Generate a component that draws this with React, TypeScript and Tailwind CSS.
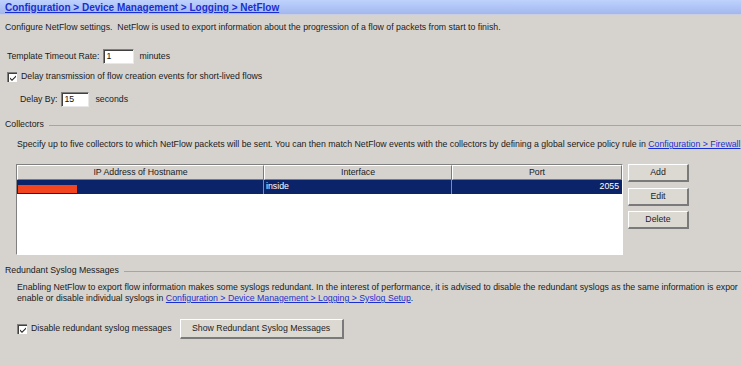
import React from "react";

const font = { fontFamily: '"Liberation Sans", Arial, sans-serif' };

function Check() {
  return (
    <span className="inline-flex w-[10px] h-[10px] bg-white border-t border-l border-[#808080] border-r-white border-b-white shadow-[inset_1px_1px_0_#404040] items-center justify-center shrink-0">
      <svg width="8" height="8" viewBox="0 0 8 8">
        <path d="M1 3.5 L3 5.5 L7 1.5 L7 3 L3 7 L1 5 Z" fill="#222" />
      </svg>
    </span>
  );
}

function Input({ value, w }: { value: string; w: string }) {
  return (
    <span className={`inline-flex h-[15px] ${w} bg-white border-t border-l border-[#808080] border-r border-b border-r-[#e8e8e8] border-b-[#e8e8e8] shadow-[inset_1px_1px_0_#404040] items-center pl-[2px] text-[8.75px] text-[#111]`}>
      {value}
    </span>
  );
}

function Btn({ label, cls }: { label: string; cls: string }) {
  return (
    <div className={`flex items-center justify-center bg-[#dcd9d3] border-t border-l border-white border-r-2 border-b-2 border-r-[#7a7a7a] border-b-[#7a7a7a] text-[8.75px] text-[#222] ${cls}`}>
      {label}
    </div>
  );
}

export default function App() {
  return (
    <div style={font} className="w-[741px] h-[366px] overflow-hidden bg-[#d6d3ce] text-[#1a1a1a] text-[8.75px] whitespace-nowrap">
      <div className="h-[15px] bg-gradient-to-b from-[#bfd2fd] to-[#a2b7ee] border-b border-[#c9cfe0] pl-[5px] flex items-center">
        <span className="text-[10px] font-bold text-[#1a2fd0] underline">
          Configuration &gt; Device Management &gt; Logging &gt; NetFlow
        </span>
      </div>
      <div className="mt-[6px] h-[12px] leading-[12px] pl-[5px]">
        Configure NetFlow settings.&nbsp; NetFlow is used to export information about the progression of a flow of packets from start to finish.
      </div>
      <div className="mt-[16px] h-[15px] pl-[7px] flex items-center">
        <span>Template Timeout Rate:</span>
        <span className="ml-[4px]"><Input value="1" w="w-[31px]" /></span>
        <span className="ml-[5px]">minutes</span>
      </div>
      <div className="mt-[6px] h-[14px] pl-[7px] flex items-center gap-[4px]">
        <Check />
        <span>Delay transmission of flow creation events for short-lived flows</span>
      </div>
      <div className="mt-[8px] h-[15px] pl-[20px] flex items-center">
        <span>Delay By:</span>
        <span className="ml-[4px]"><Input value="15" w="w-[28px]" /></span>
        <span className="ml-[6px]">seconds</span>
      </div>

      <div className="mt-[12px] h-[12px] pl-[5px] flex items-center">
        <span>Collectors</span>
        <div className="ml-[5px] flex-1 border-t border-[#a8a5a0] h-0"></div>
      </div>
      <div className="mt-[7px] h-[12px] leading-[12px] pl-[17px]">
        Specify up to five collectors to which NetFlow packets will be sent. You can then match NetFlow events with the collectors by defining a global service policy rule in{" "}
        <span className="text-[#1a2fd0] underline">Configuration &gt; Firewall</span>
      </div>
      <div className="mt-[14px] pl-[16px] flex items-start">
        <div className="w-[607px] h-[91px] bg-white border-t border-l border-[#808080] border-r border-b border-r-white border-b-white flex flex-col">
          <div className="flex h-[15px] bg-[#d6d3ce]">
            <div className="w-[247px] flex items-center justify-center border-r border-b border-[#7a7a7a] border-t border-l border-t-white border-l-white">IP Address of Hostname</div>
            <div className="w-[188px] flex items-center justify-center border-r border-b border-[#7a7a7a] border-t border-l border-t-white border-l-white">Interface</div>
            <div className="flex-1 flex items-center justify-center border-r border-b border-[#7a7a7a] border-t border-l border-t-white border-l-white">Port</div>
          </div>
          <div className="flex h-[14px] bg-[#0b2469] text-white">
            <div className="w-[247px] relative border-r border-[#7c8db5]">
              <span className="absolute left-[1px] top-[5px] w-[59px] h-[8px] bg-[#f2441f]"></span>
            </div>
            <div className="w-[188px] flex items-center pl-[2px] border-r border-[#7c8db5]">inside</div>
            <div className="flex-1 flex items-center justify-end pr-[3px]">2055</div>
          </div>
        </div>
        <div className="ml-[5px] flex flex-col">
          <Btn label="Add" cls="w-[61px] h-[18px]" />
          <Btn label="Edit" cls="w-[61px] h-[18px] mt-[6px]" />
          <Btn label="Delete" cls="w-[61px] h-[18px] mt-[5px]" />
        </div>
      </div>

      <div className="mt-[10px] h-[12px] pl-[5px] flex items-center">
        <span>Redundant Syslog Messages</span>
        <div className="ml-[5px] flex-1 border-t border-[#a8a5a0] h-0"></div>
      </div>
      <div className="mt-[5px] pl-[17px] leading-[11px]">
        <div>
          Enabling NetFlow to export flow information makes some syslogs redundant. In the interest of performance, it is advised to disable the redundant syslogs as the same information is expor
        </div>
        <div>
          enable or disable individual syslogs in{" "}
          <span className="text-[#1a2fd0] underline">Configuration &gt; Device Management &gt; Logging &gt; Syslog Setup</span>.
        </div>
      </div>
      <div className="mt-[15px] pl-[17px] flex items-center h-[20px]">
        <Check />
        <span className="ml-[4px]">Disable redundant syslog messages</span>
        <Btn label="Show Redundant Syslog Messages" cls="ml-[8px] w-[164px] h-[20px]" />
      </div>
    </div>
  );
}
